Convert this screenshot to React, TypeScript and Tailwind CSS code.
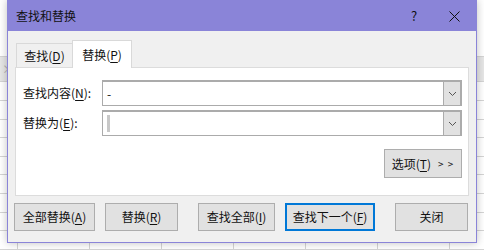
import React from "react";

const font = { fontFamily: '"Noto Sans CJK SC", "Noto Sans", sans-serif' };

function U({ c }: { c: string }) {
  return <span className="underline underline-offset-2">{c}</span>;
}

function Btn({ children, w, primary }: { children: React.ReactNode; w: string; primary?: boolean }) {
  return (
    <div
      className={`${w} h-[28px] flex items-center justify-center text-[12px] text-[#111] bg-[#e1e1e1] ${
        primary ? "border-2 border-[#0078d7]" : "border border-[#adadad]"
      }`}
    >
      {children}
    </div>
  );
}

function Combo({ children }: { children?: React.ReactNode }) {
  return (
    <div className="flex-1 h-[26px] flex border border-[#ababab] border-t-2 border-r-2 bg-white">
      <div className="flex-1 flex items-center pl-[4px] text-[12px]">{children}</div>
      <div className="w-[17px] bg-[#e1e1e1] border-l border-[#ababab] flex items-center justify-center">
        <svg width="9" height="6" viewBox="0 0 9 6">
          <path d="M1 1 L4.5 4.5 L8 1" stroke="#555" strokeWidth="1" fill="none" />
        </svg>
      </div>
    </div>
  );
}

export default function App() {
  const cols = [18, 72, 72, 72, 72, 72, 72, 72];
  return (
    <div className="relative w-[484px] h-[250px] bg-white overflow-hidden" style={font}>
      {/* spreadsheet background */}
      <div className="absolute inset-0 flex flex-col">
        <div className="h-[58px] border-b border-[#d4d4d4]" />
        <div className="h-[26px] bg-[#e6e6e6] border-b border-[#d4d4d4] flex items-center pl-[2px] text-[#b0b0b0] text-[12px]">
          ×
        </div>
        <div className="h-[19px] border-b border-[#d4d4d4]" />
        {[0, 1, 2, 3, 4, 5, 6, 7].map((i) => (
          <div key={i} className="h-[19px] border-b border-[#d4d4d4] flex">
            {cols.map((w, j) => (
              <div key={j} className="border-r border-[#d4d4d4] shrink-0" style={{ width: w }} />
            ))}
          </div>
        ))}
      </div>

      {/* dialog */}
      <div className="absolute left-[7px] top-0 w-[470px] h-[243px] border border-[#8a84d8] bg-[#f0f0f0] shadow-[0_0_8px_rgba(0,0,0,0.25)] flex flex-col">
        <div className="h-[30px] bg-[#8a84d8] flex items-center pl-[8px] text-[12px] text-[#111]">
          <span className="flex-1">查找和替换</span>
          <span className="w-[20px] text-center text-[13px] mr-[25px]">?</span>
          <svg width="11" height="11" viewBox="0 0 11 11" className="mr-[16px]">
            <path d="M0.5 0.5 L10.5 10.5 M10.5 0.5 L0.5 10.5" stroke="#111" strokeWidth="1" />
          </svg>
        </div>

        <div className="flex flex-col px-[7px] pt-[9px]">
          {/* tabs */}
          <div className="flex items-end h-[27px] pl-[1px]">
            <div className="h-[24px] w-[56px] border border-[#d9d9d9] border-r-0 border-b-0 flex items-center justify-center text-[12px] text-[#111]">
              查找(<U c="D" />)
            </div>
            <div className="h-[28px] -mb-px w-[60px] bg-white border border-[#d9d9d9] border-b-0 flex items-center justify-center text-[12px] text-[#111] relative z-10">
              替换(<U c="P" />)
            </div>
          </div>
          {/* panel */}
          <div className="h-[129px] bg-white border border-[#dcdcdc] flex flex-col pl-[7px] pr-[6px] pt-[12px]">
            <div className="flex items-center">
              <span className="w-[79px] text-[12px] text-[#111]">
                查找内容(<U c="N" />):
              </span>
              <Combo>
                <span className="text-[#111]">-</span>
              </Combo>
            </div>
            <div className="flex items-center mt-[4px]">
              <span className="w-[79px] text-[12px] text-[#111]">
                替换为(<U c="E" />):
              </span>
              <Combo>
                <span className="block w-[3px] h-[17px] bg-[#c8c8c8]" />
              </Combo>
            </div>
            <div className="flex justify-end mt-[13px]">
              <div className="w-[78px] h-[29px] bg-[#e1e1e1] border border-[#adadad] flex items-center justify-center text-[12px] text-[#111]">
                选项(<U c="T" />)<span className="ml-[7px] text-[10px] tracking-[1px]">&gt; &gt;</span>
              </div>
            </div>
          </div>
          {/* buttons */}
          <div className="flex mt-[7px] -ml-[1px]">
            <Btn w="w-[81px]">全部替换(<U c="A" />)</Btn>
            <div className="w-[10px]" />
            <Btn w="w-[73px]">替换(<U c="R" />)</Btn>
            <div className="w-[20px]" />
            <Btn w="w-[77px]">查找全部(<U c="I" />)</Btn>
            <div className="w-[10px]" />
            <Btn w="w-[90px]" primary>
              查找下一个(<U c="F" />)
            </Btn>
            <div className="w-[20px]" />
            <Btn w="w-[73px]">关闭</Btn>
          </div>
        </div>
      </div>
    </div>
  );
}
